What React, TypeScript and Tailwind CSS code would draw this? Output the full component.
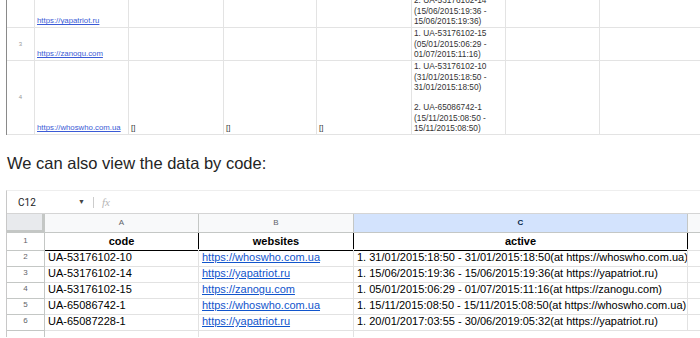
const topCols = "grid grid-cols-[28px_94px_95px_93px_95px_94px_94px_1fr]";

const row2Lines = ["1. UA-53176102-10", "2. UA-53176102-14", "(15/06/2015:19:36 -", "15/06/2015:19:36)"];
const row3Lines = ["1. UA-53176102-15", "(05/01/2015:06:29 -", "01/07/2015:11:16)"];
const row4Lines = [
  "1. UA-53176102-10",
  "(31/01/2015:18:50 -",
  "31/01/2015:18:50)",
  "",
  "2. UA-65086742-1",
  "(15/11/2015:08:50 -",
  "15/11/2015:08:50)",
];

type TopRow = { num: string; height: string; site: string; empties: boolean; lines: string[] };

const topRows: TopRow[] = [
  { num: "2", height: "h-[28px]", site: "https://yapatriot.ru", empties: false, lines: row2Lines },
  { num: "3", height: "h-[33px]", site: "https://zanogu.com", empties: false, lines: row3Lines },
  { num: "4", height: "h-[74px]", site: "https://whoswho.com.ua", empties: true, lines: row4Lines },
];

const sheetRows = [
  ["UA-53176102-10", "https://whoswho.com.ua", "1. 31/01/2015:18:50 - 31/01/2015:18:50(at https://whoswho.com.ua)"],
  ["UA-53176102-14", "https://yapatriot.ru", "1. 15/06/2015:19:36 - 15/06/2015:19:36(at https://yapatriot.ru)"],
  ["UA-53176102-15", "https://zanogu.com", "1. 05/01/2015:06:29 - 01/07/2015:11:16(at https://zanogu.com)"],
  ["UA-65086742-1", "https://whoswho.com.ua", "1. 15/11/2015:08:50 - 15/11/2015:08:50(at https://whoswho.com.ua)"],
  ["UA-65087228-1", "https://yapatriot.ru", "1. 20/01/2017:03:55 - 30/06/2019:05:32(at https://yapatriot.ru)"],
];

const sheetCols = "grid grid-cols-[38px_154px_155px_334px_1fr]";

function TopCell({ children, className = "" }: { children?: React.ReactNode; className?: string }) {
  return (
    <div className={`flex flex-col justify-end overflow-hidden border-r border-b border-[#e3e3e3] px-[2px] ${className}`}>
      {children}
    </div>
  );
}

function OldSheet() {
  return (
    <div className="ml-[6px] border-l border-[#8a8a8a] font-['Liberation_Sans',sans-serif] text-[7.8px] leading-[10.6px] text-[#333]">
      {topRows.map((row) => (
        <div key={row.num} className={`${topCols} ${row.height}`}>
          <div className="flex items-center justify-center border-r border-b border-[#e3e3e3] text-[6px] text-[#999]">
            {row.num === "2" ? "" : row.num}
          </div>
          <TopCell>
            <span className="text-[#3b5bd6] underline">{row.site}</span>
          </TopCell>
          <TopCell>{row.empties ? "[]" : ""}</TopCell>
          <TopCell>{row.empties ? "[]" : ""}</TopCell>
          <TopCell>{row.empties ? "[]" : ""}</TopCell>
          <TopCell className="text-[8.3px]">
            {row.lines.map((line, i) => (
              <div key={i} className="h-[10.6px] whitespace-nowrap">
                {line}
              </div>
            ))}
          </TopCell>
          <TopCell />
          <div className="border-b border-[#e3e3e3]" />
        </div>
      ))}
    </div>
  );
}

function NewSheet() {
  return (
    <div className="ml-[6px] border-l border-t border-[#c8c8c8] border-t-[#eeeeee] font-['Liberation_Sans',sans-serif]">
      <div className="flex h-[23px] items-center border-b border-[#d5d5d5] font-['Roboto',sans-serif]">
        <span className="ml-[11px] w-[60px] text-[10px] text-[#202124]">C12</span>
        <span className="text-[7px] text-[#444]">▼</span>
        <span className="ml-[8px] h-[11px] w-px bg-[#ccc]" />
        <span className="ml-[8px] font-['Liberation_Serif',serif] text-[11px] italic text-[#b5b5b5]">fx</span>
      </div>

      <div className={`${sheetCols} h-[19px] text-[8px]`}>
        <div className="border-r-[3px] border-b-[3px] border-[#c4c7c5] bg-[#e8eaed]" />
        <div className="flex items-center justify-center border-r border-b border-[#c4c7c5] bg-[#f8f9fa] text-[#5f6368]">A</div>
        <div className="flex items-center justify-center border-r border-b border-[#c4c7c5] bg-[#f8f9fa] text-[#5f6368]">B</div>
        <div className="flex items-center justify-center border-r border-b border-[#c4c7c5] bg-[#d3e3fd] font-bold text-[#041e49]">C</div>
        <div className="border-b border-[#c4c7c5] bg-[#f8f9fa]" />
      </div>

      <div className={`${sheetCols} h-[16px] text-[11px] text-black`}>
        <div className="flex items-center justify-center border-r border-b border-[#c4c7c5] text-[8px] text-[#5f6368]">1</div>
        <div className="flex items-center justify-center border-r border-b border-black font-bold">code</div>
        <div className="flex items-center justify-center border-r border-b border-black font-bold">websites</div>
        <div className="flex items-center justify-center border-r border-b border-black font-bold">active</div>
        <div className="border-b border-[#e2e2e2]" />
      </div>

      {sheetRows.map((row, i) => (
        <div key={row[0]} className={`${sheetCols} h-[16px] text-[11px] text-black`}>
          <div className="flex items-center justify-center border-r border-b border-[#c4c7c5] text-[8px] text-[#5f6368]">{i + 2}</div>
          <div className="flex items-center border-r border-b border-[#e2e2e2] px-[3px] whitespace-nowrap">{row[0]}</div>
          <div className="flex items-center border-r border-b border-[#e2e2e2] px-[3px] whitespace-nowrap text-[#1155cc] underline">
            {row[1]}
          </div>
          <div className="flex items-center overflow-hidden border-r border-b border-[#e2e2e2] px-[3px] whitespace-nowrap">{row[2]}</div>
          <div className="border-b border-[#e2e2e2]" />
        </div>
      ))}
      <div className={`${sheetCols} h-[8px]`}>
        <div className="border-r border-[#c4c7c5]" />
        <div className="border-r border-[#e2e2e2]" />
        <div className="border-r border-[#e2e2e2]" />
        <div />
        <div />
      </div>
    </div>
  );
}

export default function App() {
  return (
    <main className="h-[338px] w-[700px] overflow-hidden bg-white">
      <OldSheet />
      <p className="mt-[16px] ml-[7px] h-[39px] font-['Liberation_Sans',sans-serif] text-[16.5px] leading-[24px] text-[#242424]">
        We can also view the data by code:
      </p>
      <NewSheet />
    </main>
  );
}
